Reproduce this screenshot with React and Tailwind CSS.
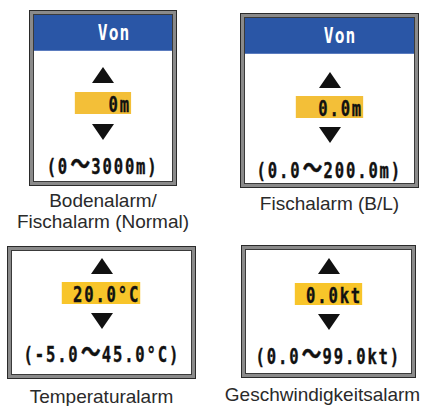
import React from "react";

const LCD = "font-['DejaVu_Sans_Mono',monospace] font-bold text-[21px] tracking-[2.5px] text-[#111] [-webkit-text-stroke:0.4px_#111]";
const LABEL = "font-['Liberation_Sans',Arial,sans-serif] text-[19px] leading-[21px] text-[#2a2a2a] whitespace-nowrap text-center";

function Up() {
  return (
    <svg width="22" height="16" viewBox="0 0 22 16" className="block shrink-0">
      <polygon points="11,0 22,16 0,16" fill="#111" />
    </svg>
  );
}
function Down() {
  return (
    <svg width="22" height="16" viewBox="0 0 22 16" className="block shrink-0">
      <polygon points="0,0 22,0 11,16" fill="#111" />
    </svg>
  );
}

function Tilde() {
  return (
    <span className="inline-block w-[30px] text-center tracking-normal font-['Noto_Sans_CJK_JP',sans-serif] text-[27px] leading-none">〜</span>
  );
}

function Frame({ className, children }) {
  return (
    <div className={"border border-[#2a2a2a] bg-[#8a8a8a] p-[3px] " + className}>
      <div className="border border-[#3a3a3a] bg-white h-full flex flex-col items-center">
        {children}
      </div>
    </div>
  );
}

function Header() {
  return (
    <div className="w-full h-[36px] shrink-0 bg-[#2a56a6] border-b border-[#5b7cbf] flex items-center justify-center pl-[22px]">
      <span className="inline-block scale-x-[0.74] font-['DejaVu_Sans_Mono',monospace] font-bold text-[22px] tracking-[1.5px] leading-none text-white">Von</span>
    </div>
  );
}

function Value({ text, yellow = "bg-[#f3bf38]" }) {
  return (
    <span className={LCD + " inline-block whitespace-pre h-[22px] leading-[26px] scale-x-[0.74] " + yellow}>{text}</span>
  );
}

function Range({ a, b }) {
  return (
    <div className={LCD + " whitespace-pre leading-[20px] scale-x-[0.74]"}>
      {a}
      <Tilde />
      {b}
    </div>
  );
}

export default function App() {
  return (
    <div className="w-[424px] h-[406px] bg-white overflow-hidden">
      <div className="flex h-[240px]">
        <div className="ml-[29px] mt-[10px] w-[148px] flex flex-col items-center">
          <Frame className="w-[148px] h-[176px]">
            <Header />
            <div className="mt-[16px]"><Up /></div>
            <div className="mt-[9px] flex"><Value text={"   0m"} /></div>
            <div className="mt-[10px]"><Down /></div>
            <div className="mt-[9px]"><Range a="(0" b="3000m)" /></div>
          </Frame>
          <div className={LABEL + " mt-[4px]"}>
            Bodenalarm/
            <br />
            Fischalarm (Normal)
          </div>
        </div>
        <div className="ml-[63px] mt-[13px] w-[179px] flex flex-col items-center">
          <Frame className="w-[179px] h-[175px]">
            <Header />
            <div className="mt-[18px]"><Up /></div>
            <div className="mt-[8px] flex"><Value text={"  0.0m"} /></div>
            <div className="mt-[9px]"><Down /></div>
            <div className="mt-[10px]"><Range a="(0.0" b="200.0m)" /></div>
          </Frame>
          <div className={LABEL + " mt-[5px]"}>Fischalarm (B/L)</div>
        </div>
      </div>
      <div className="flex">
        <div className="ml-[7px] mt-[6px] w-[189px] flex flex-col items-center">
          <Frame className="w-[189px] h-[133px]">
            <div className="mt-[7px]"><Up /></div>
            <div className="mt-[8px] flex"><Value text={" 20.0°C"} yellow="bg-[#f8c52a]" /></div>
            <div className="mt-[9px]"><Down /></div>
            <div className="mt-[8px]"><Range a="(-5.0" b="45.0°C)" /></div>
          </Frame>
          <div className={LABEL + " mt-[7px]"}>Temperaturalarm</div>
        </div>
        <div className="ml-[45px] mt-[5px] w-[175px] flex flex-col items-center">
          <Frame className="w-[175px] h-[133px]">
            <div className="mt-[8px]"><Up /></div>
            <div className="mt-[9px] flex"><Value text={" 0.0kt"} yellow="bg-[#f8c52a]" /></div>
            <div className="mt-[9px]"><Down /></div>
            <div className="mt-[9px]"><Range a="(0.0" b="99.0kt)" /></div>
          </Frame>
          <div className={LABEL + " mt-[6px] mr-[12px]"}>Geschwindigkeitsalarm</div>
        </div>
      </div>
    </div>
  );
}
